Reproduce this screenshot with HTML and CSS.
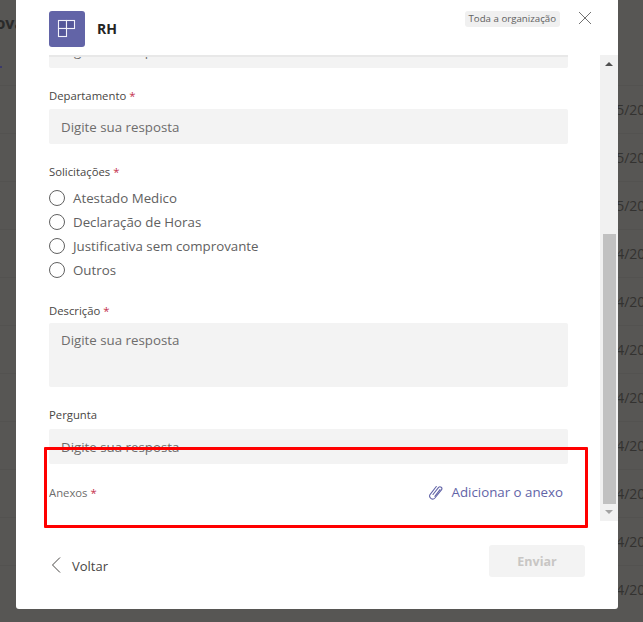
FILE: index.html
```html
<!DOCTYPE html>
<html lang="pt">
<head>
<meta charset="utf-8">
<title>RH</title>
<link rel="stylesheet" href="styles.css">
</head>
<body>
<div class="page">
  <div class="page-title">Aprova</div>
  <div class="page-mark"></div>
  <ul class="dates">
    <li>15/05/2022</li>
    <li>15/05/2022</li>
    <li>15/05/2022</li>
    <li>14/04/2022</li>
    <li>14/04/2022</li>
    <li>14/04/2022</li>
    <li>14/04/2022</li>
    <li>14/04/2022</li>
    <li>14/04/2022</li>
    <li>14/04/2022</li>
    <li>14/04/2022</li>
  </ul>
</div>
<div class="modal">
  <header class="head">
    <div class="app-icon">
      <svg width="20" height="20" viewBox="0 0 20 20" fill="#55579a" stroke="#f2f2fa" stroke-width="1.1">
        <rect x="1.5" y="1.5" width="8" height="8"/>
        <rect x="9.5" y="1.5" width="8" height="8"/>
        <rect x="1.5" y="9.5" width="8" height="8"/>
      </svg>
    </div>
    <div class="app-name">RH</div>
    <div class="pill">Toda a organização</div>
    <svg class="close" width="14" height="14" viewBox="0 0 14 14" fill="none" stroke="#616161" stroke-width="0.9">
      <path d="M1 1 13 13M13 1 1 13"/>
    </svg>
  </header>
  <div class="scroller">
    <div class="form-clip">
      <div class="form">
        <div class="input input-first">Digite sua resposta</div>
        <div class="label label-dep">Departamento <span class="req">*</span></div>
        <div class="input">Digite sua resposta</div>
        <div class="label label-sol">Solicitações <span class="req">*</span></div>
        <div class="radios">
          <div class="radio"><span class="dot"></span>Atestado Medico</div>
          <div class="radio"><span class="dot"></span>Declaração de Horas</div>
          <div class="radio"><span class="dot"></span>Justificativa sem comprovante</div>
          <div class="radio"><span class="dot"></span>Outros</div>
        </div>
        <div class="label label-desc">Descrição <span class="req">*</span></div>
        <div class="input textarea">Digite sua resposta</div>
        <div class="label label-per">Pergunta</div>
        <div class="input">Digite sua resposta</div>
        <div class="attach">
          <div class="label-muted">Anexos <span class="req">*</span></div>
          <div class="attach-link">
            <svg width="16" height="16" viewBox="0 0 16 16" fill="none" stroke="#6264a7" stroke-width="1.1" stroke-linecap="round">
              <path d="M5 10.5 10.6 3.4a1.9 1.9 0 0 1 3 2.3L6.9 14a3 3 0 0 1-4.7-3.700L8.300 2.500"/>
              <path d="M6.900 12.300 12 5.600"/>
            </svg>
            Adicionar o anexo
          </div>
        </div>
      </div>
    </div>
    <div class="scrollbar">
      <span class="arrow arrow-up"></span>
      <div class="track"><div class="thumb"></div></div>
      <span class="arrow arrow-down"></span>
    </div>
  </div>
  <footer class="foot">
    <div class="back">
      <svg width="10" height="16" viewBox="0 0 10 16" fill="none" stroke="#484644" stroke-width="1">
        <path d="M9 .5 1.500 8 9 15.500"/>
      </svg>
      <span class="back-text">Voltar</span>
    </div>
    <div class="send">Enviar</div>
  </footer>
</div>
<div class="highlight"></div>
</body>
</html>
```
FILE: styles.css
```css
* { box-sizing: border-box; }
html, body { margin: 0; padding: 0; height: 100%; }
body {
  width: 643px;
  height: 622px;
  overflow: hidden;
  background: #575654;
  font-family: "Open Sans", "Noto Sans", sans-serif;
  position: relative;
}
.page { height: 622px; overflow: hidden; position: relative; }
.page-title {
  margin: 12px 0 0 -33px;
  font-size: 16px;
  line-height: 22px;
  font-weight: 700;
  color: #2a2a2a;
  white-space: nowrap;
}
.page-mark { width: 2px; height: 2px; margin-top: 32px; background: #3c3a6a; }
.dates {
  list-style: none;
  margin: 17px 0 0;
  padding: 0;
}
.dates li {
  height: 48px;
  border-top: 1px solid #535250;
  padding: 13px 0 0 587px;
  font-size: 14px;
  line-height: 22px;
  color: #333230;
  white-space: nowrap;
  overflow: hidden;
}
.modal {
  position: absolute;
  left: 16px;
  top: 0;
  width: 602px;
  height: 609px;
  background: #fff;
  border-radius: 0 0 3px 3px;
  display: flex;
  flex-direction: column;
}
.head {
  height: 55px;
  flex: none;
  display: flex;
  align-items: flex-start;
  padding: 11px 26px 0 33px;
}
.app-icon {
  width: 36px;
  height: 36px;
  background: #6264a7;
  border-radius: 3px;
  display: flex;
  align-items: center;
  justify-content: center;
}
.app-name {
  margin-left: 12px;
  font-size: 14px;
  line-height: 36px;
  font-weight: 700;
  color: #252423;
}
.pill {
  margin-left: auto;
  height: 16px;
  padding: 0 4px;
  background: #f0f0f0;
  border-radius: 3px;
  font-size: 9.700px;
  line-height: 16px;
  color: #616161;
  white-space: nowrap;
}
.close { margin: 0 0 0 18px; }
.scroller {
  height: 466px;
  flex: none;
  display: flex;
  overflow: hidden;
}
.form-clip {
  width: 519px;
  margin-left: 33px;
  flex: none;
  overflow: hidden;
  border-top: 2px solid #e8e8e8;
}
.form { margin-top: -24px; }
.input {
  height: 35px;
  padding: 0 12px;
  background: #f3f3f3;
  border-radius: 2px;
  font-size: 13.300px;
  line-height: 36px;
  color: #6e6d6c;
  white-space: nowrap;
}
.textarea { height: 64px; line-height: 35px; }
.label {
  font-size: 11.300px;
  line-height: 16px;
  color: #484644;
}
.label-dep { margin-top: 20px; margin-bottom: 5px; }
.label-sol { margin-top: 20px; margin-bottom: 6px; }
.label-desc { margin-top: 21px; margin-bottom: 4px; }
.label-per { margin-top: 20px; margin-bottom: 6px; }
.req { color: #c4314b; }
.radios { display: flex; flex-direction: column; }
.radio {
  height: 24px;
  display: flex;
  align-items: center;
  font-size: 13.300px;
  color: #616161;
}
.dot {
  width: 16px;
  height: 16px;
  border: 1px solid #616161;
  border-radius: 50%;
  margin-right: 8px;
  flex: none;
}
.attach {
  display: flex;
  align-items: center;
  justify-content: space-between;
  margin-top: 18px;
  height: 20px;
  padding-right: 5px;
}
.label-muted { font-size: 11.300px; color: #6e6d6c; }
.attach-link {
  display: flex;
  align-items: center;
  gap: 8px;
  font-size: 13.300px;
  color: #6264a7;
}
.scrollbar {
  width: 18px;
  margin-left: auto;
  background: #f1f1f1;
  display: flex;
  flex-direction: column;
  align-items: center;
}
.arrow { width: 0; height: 0; border-left: 4px solid transparent; border-right: 4px solid transparent; flex: none; }
.arrow-up { margin-top: 7px; border-bottom: 4px solid #505050; }
.arrow-down { margin: 6px 0 7px; border-top: 4px solid #a3a3a3; }
.track { flex: 1; width: 100%; display: flex; align-items: flex-end; justify-content: center; }
.thumb { width: 13px; height: 270px; background: #c1c1c1; }
.foot {
  flex: 1;
  display: flex;
  align-items: flex-start;
  justify-content: space-between;
  padding: 24px 33px 0 35px;
}
.back {
  display: flex;
  align-items: center;
  gap: 11px;
  height: 32px;
  margin-top: 4px;
  font-size: 13px;
  color: #484644;
}
.back-text { padding-top: 1px; }
.send {
  width: 96px;
  height: 32px;
  background: #f3f3f3;
  border-radius: 3px;
  font-size: 12.500px;
  font-weight: 700;
  line-height: 34px;
  text-align: center;
  color: #c8c6c4;
}
.highlight {
  position: absolute;
  left: 44px;
  top: 447px;
  width: 544px;
  height: 81px;
  border: 3px solid #ff0000;
  border-radius: 1px;
  pointer-events: none;
}
```
